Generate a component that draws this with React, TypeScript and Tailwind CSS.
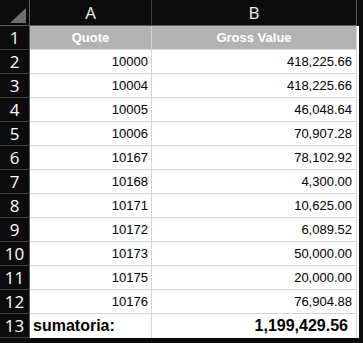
import React from 'react';

const rows: [string, string][] = [
  ['10000', '418,225.66'],
  ['10004', '418,225.66'],
  ['10005', '46,048.64'],
  ['10006', '70,907.28'],
  ['10167', '78,102.92'],
  ['10168', '4,300.00'],
  ['10171', '10,625.00'],
  ['10172', '6,089.52'],
  ['10173', '50,000.00'],
  ['10175', '20,000.00'],
  ['10176', '76,904.88'],
];

const sans = "font-['Liberation_Sans',Arial,sans-serif]";

function RowNum({ n }: { n: number }) {
  return (
    <div className="w-[30px] shrink-0 h-full flex items-center justify-center bg-[#0b0b0b] border-r border-b border-r-[#5a5a5a] border-b-[#3c3c3c] text-[17px] text-white font-['Open_Sans',sans-serif] leading-none">
      {n}
    </div>
  );
}

export default function App() {
  return (
    <div className="w-[363px] h-[343px] bg-[#0b0b0b] flex flex-col">
      {/* column letters */}
      <div className="flex h-[26px] shrink-0">
        <div className="w-[30px] shrink-0 h-full relative border-r border-b border-[#5a5a5a]">
          <svg className="absolute left-[10px] top-[8px]" width="16" height="15" viewBox="0 0 16 15">
            <polygon points="16,0 16,15 0,15" fill="#6e6e6e" />
          </svg>
        </div>
        <div className="w-[122px] shrink-0 h-full flex items-center justify-center border-r border-b border-r-[#3c3c3c] border-b-[#5a5a5a] text-[17px] text-[#f0f0f0] font-['Open_Sans',sans-serif]">
          A
        </div>
        <div className="w-[205px] shrink-0 h-full flex items-center justify-center border-r border-b border-r-[#5a5a5a] border-b-[#5a5a5a] text-[17px] text-[#f0f0f0] font-['Open_Sans',sans-serif]">
          B
        </div>
        <div className="flex-1" />
      </div>

      {/* header row */}
      <div className="flex h-[24px] shrink-0">
        <RowNum n={1} />
        <div className={`w-[122px] shrink-0 flex items-center justify-center bg-[#b3b3b3] border-r border-b border-[#d4d4d4] text-[13px] font-bold text-white ${sans}`}>
          Quote
        </div>
        <div className={`w-[205px] shrink-0 flex items-center justify-center bg-[#b3b3b3] border-r border-b border-[#d4d4d4] text-[13px] font-bold text-white ${sans}`}>
          Gross Value
        </div>
        <div className="w-[2px] bg-white" />
      </div>

      {rows.map(([q, v], i) => (
        <div key={q} className="flex h-[24px] shrink-0">
          <RowNum n={i + 2} />
          <div className={`w-[122px] shrink-0 flex items-center justify-end pr-[3px] bg-white border-r border-b border-[#d4d4d4] text-[13px] text-black ${sans}`}>
            {q}
          </div>
          <div className={`w-[205px] shrink-0 flex items-center justify-end pr-[4px] bg-white border-r border-b border-[#d4d4d4] text-[13px] text-black ${sans}`}>
            {v}
          </div>
          <div className="w-[2px] bg-white" />
        </div>
      ))}

      {/* total */}
      <div className="flex h-[24px] shrink-0">
        <RowNum n={13} />
        <div className={`w-[122px] shrink-0 flex items-center pl-[3px] bg-white border-r border-[#d4d4d4] text-[16px] font-bold text-black ${sans}`}>
          sumatoria:
        </div>
        <div className={`w-[205px] shrink-0 flex items-center justify-end pr-[8px] bg-white border-r border-[#d4d4d4] text-[16px] font-bold text-black ${sans}`}>
          1,199,429.56
        </div>
        <div className="w-[2px] bg-white" />
      </div>
    </div>
  );
}
